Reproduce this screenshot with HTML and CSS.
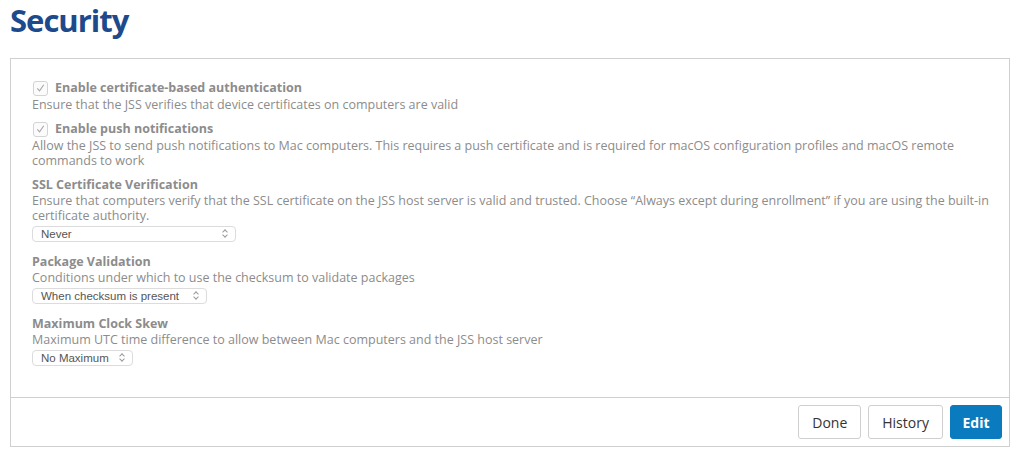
FILE: index.html
```html
<!DOCTYPE html>
<html lang="en">
<head>
    <meta charset="UTF-8">
    <title>Security</title>
    <link rel="stylesheet" href="styles.css">
</head>
<body>
    <h1 class="page-title">Security</h1>
    <div class="panel">
        <div class="panel-body">
            <div class="field check-field">
                <label class="check-label">
                    <span class="checkbox"><svg viewBox="0 0 14 14" width="14" height="14"><path d="M3.5 7.5 L6 10 L10.5 3.5" fill="none" stroke="#a8a8a8" stroke-width="1.2"/></svg></span>
                    Enable certificate-based authentication
                </label>
                <p class="help">Ensure that the JSS verifies that device certificates on computers are valid</p>
            </div>
            <div class="field check-field">
                <label class="check-label">
                    <span class="checkbox"><svg viewBox="0 0 14 14" width="14" height="14"><path d="M3.5 7.5 L6 10 L10.5 3.5" fill="none" stroke="#a8a8a8" stroke-width="1.2"/></svg></span>
                    Enable push notifications
                </label>
                <p class="help">Allow the JSS to send push notifications to Mac computers. This requires a push certificate and is required for macOS configuration profiles and macOS remote commands to work</p>
            </div>
            <div class="field">
                <div class="field-label">SSL Certificate Verification</div>
                <p class="help">Ensure that computers verify that the SSL certificate on the JSS host server is valid and trusted. Choose “Always except during enrollment” if you are using the built-in certificate authority.</p>
                <div class="select select-wide">Never<span class="arrows"></span></div>
            </div>
            <div class="field">
                <div class="field-label">Package Validation</div>
                <p class="help">Conditions under which to use the checksum to validate packages</p>
                <div class="select select-mid">When checksum is present<span class="arrows"></span></div>
            </div>
            <div class="field">
                <div class="field-label">Maximum Clock Skew</div>
                <p class="help">Maximum UTC time difference to allow between Mac computers and the JSS host server</p>
                <div class="select select-small">No Maximum<span class="arrows"></span></div>
            </div>
        </div>
        <div class="panel-footer">
            <button class="btn">Done</button>
            <button class="btn">History</button>
            <button class="btn btn-primary">Edit</button>
        </div>
    </div>
</body>
</html>
```

FILE: styles.css
```css
:root {
    --title-color: #1d4a8c;
    --text-muted: #8c8c8c;
    --border-color: #cfcfcf;
    --accent-color: #0b7bbf;
}

html, body {
    margin: 0;
    padding: 0;
    background-color: #ffffff;
}

body {
    font-family: "Open Sans", "Noto Sans", sans-serif;
    width: 1012px;
    height: 452px;
    overflow: hidden;
}

.page-title {
    margin: 0;
    padding: 0 10px;
    height: 58px;
    line-height: 40px;
    font-size: 31px;
    font-weight: 700;
    color: var(--title-color);
    letter-spacing: -1px;
}

.panel {
    margin: 0 2px 0 10px;
    border: 1px solid var(--border-color);
    height: 389px;
    display: flex;
    flex-direction: column;
    box-sizing: border-box;
}

.panel-body {
    flex: 1;
    padding: 21px 10px 0 21px;
}

.field {
    margin-bottom: 12px;
}

.check-field {
    margin-bottom: 9px;
}

.check-label,
.field-label {
    display: flex;
    align-items: center;
    gap: 7px;
    font-size: 12.5px;
    font-weight: 700;
    line-height: 16px;
    color: var(--text-muted);
}

.checkbox {
    display: inline-flex;
    width: 15px;
    height: 15px;
    margin-left: 1px;
    border: 1px solid #d4d4d4;
    border-radius: 3px;
    box-sizing: border-box;
    background-color: #fbfbfb;
    align-items: center;
    justify-content: center;
}

.checkbox svg {
    display: block;
}

.help {
    margin: 0;
    font-size: 12.5px;
    line-height: 15px;
    color: var(--text-muted);
}

.check-label + .help {
    margin-top: 1px;
}

.select {
    position: relative;
    margin-top: 3px;
    height: 16px;
    line-height: 15px;
    padding-left: 8px;
    border: 1px solid #dcdcdc;
    border-radius: 4px;
    box-sizing: border-box;
    font-family: "Liberation Sans", Arial, sans-serif;
    font-size: 11.5px;
    color: #555555;
    background-color: #ffffff;
}

.select-wide { width: 204px; }
.select-mid { width: 175px; }
.select-small { width: 101px; }

.arrows {
    position: absolute;
    right: 6px;
    top: 2px;
    width: 6px;
    height: 9px;
}

.arrows::before,
.arrows::after {
    content: "";
    position: absolute;
    left: 0;
    width: 3px;
    height: 3px;
    border-left: 1px solid #999;
    border-top: 1px solid #999;
}

.arrows::before {
    top: 1px;
    transform: rotate(45deg);
}

.arrows::after {
    bottom: 1px;
    transform: rotate(225deg);
}

.panel-footer {
    border-top: 1px solid var(--border-color);
    height: 49px;
    display: flex;
    justify-content: flex-end;
    align-items: center;
    gap: 7px;
    padding-right: 7px;
    box-sizing: border-box;
}

.btn {
    font-family: "Open Sans", "Noto Sans", sans-serif;
    font-size: 14px;
    height: 34px;
    padding: 0 13px;
    border: 1px solid #cfcfcf;
    border-radius: 3px;
    background-color: #ffffff;
    color: #333333;
    cursor: pointer;
}

.btn-primary {
    padding: 0 11.5px;
    background-color: var(--accent-color);
    border-color: var(--accent-color);
    color: #ffffff;
    font-weight: 700;
}
```
